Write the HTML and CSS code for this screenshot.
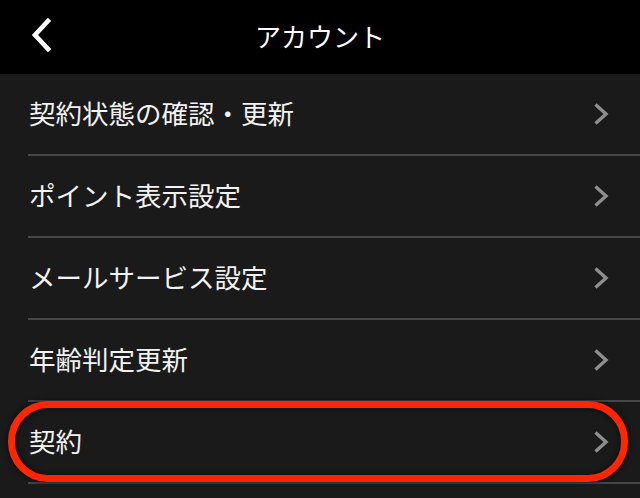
FILE: index.html
```html
<!DOCTYPE html>
<html lang="ja">
<head>
<meta charset="utf-8">
<link rel="stylesheet" href="styles.css">
</head>
<body>
<header class="topbar">
  <div class="back">
    <svg width="24" height="34" viewBox="0 0 24 34"><path d="M17 3 L4 17 L17 31" fill="none" stroke="#fff" stroke-width="4.6" stroke-linecap="square" stroke-linejoin="miter"/></svg>
  </div>
  <h1 class="title">アカウント</h1>
  <div></div>
</header>
<ul class="menu">
  <li class="item"><span class="label">契約状態の確認・更新</span><svg class="chev" width="16" height="24" viewBox="0 0 16 24"><path d="M2.5 2.5 L13 12 L2.5 21.5" fill="none" stroke="#8e8e8e" stroke-width="3.4"/></svg></li>
  <li class="item"><span class="label">ポイント表示設定</span><svg class="chev" width="16" height="24" viewBox="0 0 16 24"><path d="M2.5 2.5 L13 12 L2.5 21.5" fill="none" stroke="#8e8e8e" stroke-width="3.4"/></svg></li>
  <li class="item"><span class="label">メールサービス設定</span><svg class="chev" width="16" height="24" viewBox="0 0 16 24"><path d="M2.5 2.5 L13 12 L2.5 21.5" fill="none" stroke="#8e8e8e" stroke-width="3.4"/></svg></li>
  <li class="item"><span class="label">年齢判定更新</span><svg class="chev" width="16" height="24" viewBox="0 0 16 24"><path d="M2.5 2.5 L13 12 L2.5 21.5" fill="none" stroke="#8e8e8e" stroke-width="3.4"/></svg></li>
  <li class="item marked"><span class="label">契約</span><svg class="chev" width="16" height="24" viewBox="0 0 16 24"><path d="M2.5 2.5 L13 12 L2.5 21.5" fill="none" stroke="#8e8e8e" stroke-width="3.4"/></svg><span class="highlight"></span></li>
</ul>
</body>
</html>
```
FILE: styles.css
```css
html, body {
  margin: 0;
  padding: 0;
  background: #1a1a1a;
  font-family: "Noto Sans CJK JP", "Noto Sans", sans-serif;
  color: #f2f2f2;
}
.topbar {
  height: 74px;
  background: #000;
  display: grid;
  grid-template-columns: 1fr auto 1fr;
  align-items: center;
}
.back {
  padding-left: 31px;
  display: flex;
  align-items: center;
  padding-bottom: 4px;
}
.back svg { display: block; }
.title {
  margin: 0;
  font-size: 26px;
  font-weight: normal;
  color: #fff;
  letter-spacing: 0;
  line-height: 1;
  padding-bottom: 2px;
}
.menu {
  list-style: none;
  margin: 0;
  padding: 0;
}
.item {
  height: 80px;
  margin-left: 28px;
  padding-right: 31px;
  border-bottom: 2px solid #474747;
  display: flex;
  align-items: center;
  justify-content: space-between;
}
.label {
  font-size: 26.5px;
  line-height: 1;
  padding-left: 1px;
  padding-bottom: 2px;
}
.chev { display: block; }
.marked { position: relative; }
.highlight {
  position: absolute;
  left: -20px;
  right: 12px;
  top: -1px;
  bottom: 0;
  border: 7px solid #ff2600;
  border-radius: 40px;
  box-shadow: 0 0 6px rgba(0,0,0,0.7), inset 0 0 6px rgba(0,0,0,0.6);
}
```
